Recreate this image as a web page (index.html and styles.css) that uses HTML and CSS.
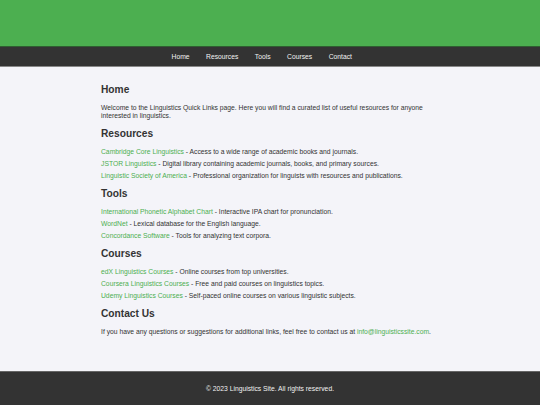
FILE: index.html
```html
<!DOCTYPE html>
<html lang="en">
<head>
<meta charset="utf-8">
<title>Linguistics Quick Links</title>
<link rel="stylesheet" href="styles.css">
</head>
<body>
<header class="site-header"></header>
<nav class="site-nav">
  <a href="#home">Home</a>
  <a href="#resources">Resources</a>
  <a href="#tools">Tools</a>
  <a href="#courses">Courses</a>
  <a href="#contact">Contact</a>
</nav>
<main class="content">
  <section id="home">
    <h2>Home</h2>
    <p>Welcome to the Linguistics Quick Links page. Here you will find a curated list of useful resources for anyone interested in linguistics.</p>
  </section>
  <section id="resources">
    <h2>Resources</h2>
    <ul>
      <li><a href="#">Cambridge Core Linguistics</a> - Access to a wide range of academic books and journals.</li>
      <li><a href="#">JSTOR Linguistics</a> - Digital library containing academic journals, books, and primary sources.</li>
      <li><a href="#">Linguistic Society of America</a> - Professional organization for linguists with resources and publications.</li>
    </ul>
  </section>
  <section id="tools">
    <h2>Tools</h2>
    <ul>
      <li><a href="#">International Phonetic Alphabet Chart</a> - Interactive IPA chart for pronunciation.</li>
      <li><a href="#">WordNet</a> - Lexical database for the English language.</li>
      <li><a href="#">Concordance Software</a> - Tools for analyzing text corpora.</li>
    </ul>
  </section>
  <section id="courses">
    <h2>Courses</h2>
    <ul>
      <li><a href="#">edX Linguistics Courses</a> - Online courses from top universities.</li>
      <li><a href="#">Coursera Linguistics Courses</a> - Free and paid courses on linguistics topics.</li>
      <li><a href="#">Udemy Linguistics Courses</a> - Self-paced online courses on various linguistic subjects.</li>
    </ul>
  </section>
  <section id="contact">
    <h2>Contact Us</h2>
    <p>If you have any questions or suggestions for additional links, feel free to contact us at <a href="#">info@linguisticssite.com</a>.</p>
  </section>
</main>
<footer class="site-footer">
  <p>&copy; 2023 Linguistics Site. All rights reserved.</p>
</footer>
</body>
</html>
```
FILE: styles.css
```css
html, body {
  margin: 0;
  padding: 0;
}
body {
  font-family: "Liberation Sans", Arial, sans-serif;
  font-size: 6.75px;
  line-height: 1.2;
  color: #333;
  background: #f4f4f9;
}
.site-header {
  height: 47px;
  background: #4caf50;
  border-bottom: 1px solid #2f5e31;
  box-sizing: border-box;
}
.site-nav {
  display: flex;
  justify-content: center;
  height: 20px;
  padding-top: 1px;
  align-items: center;
  background: #333;
  border-bottom: 1px solid #888;
  box-sizing: border-box;
}
.site-nav a {
  color: #f2f2f2;
  text-decoration: none;
  margin-right: 16.5px;
}
.content {
  width: 338px;
  margin: 0 auto;
  padding: 9.5px 0 27px;
}
.content h2 {
  font-size: 10.2px;
  margin: 7.5px 0 8px;
  color: #333;
}
.content p {
  margin: 0 0 7.5px;
}
.content ul {
  list-style: none;
  margin: 0 0 7px;
  padding: 0;
  display: flex;
  flex-direction: column;
  gap: 4px;
}
.content a {
  color: #4caf50;
  text-decoration: none;
}
.site-footer {
  background: #333;
  color: #f2f2f2;
  height: 35px;
  border-top: 1px solid #666;
  box-sizing: border-box;
  display: flex;
  align-items: center;
  justify-content: center;
}
.site-footer p {
  margin: 0;
}
```
